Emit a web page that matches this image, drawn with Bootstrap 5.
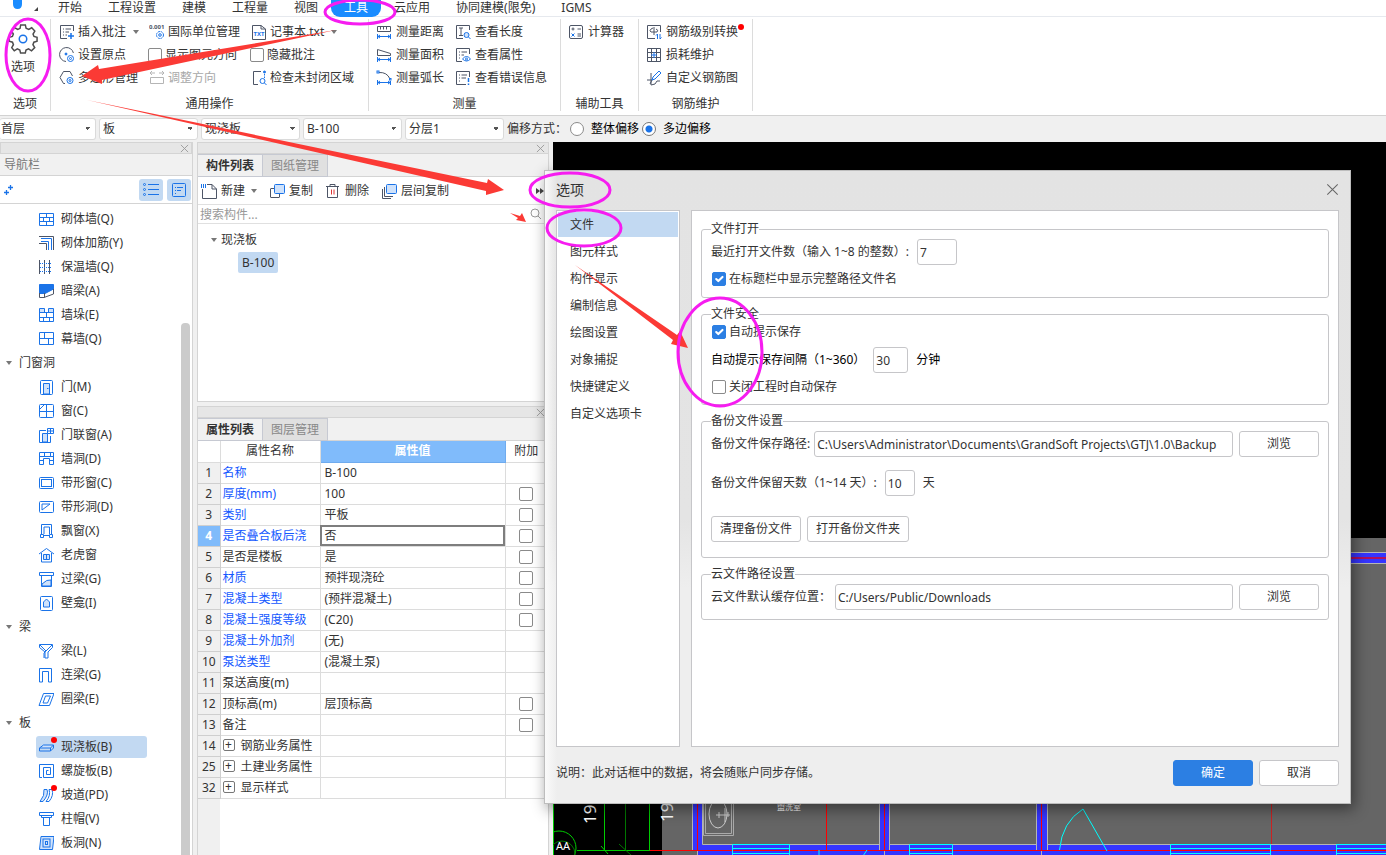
<!DOCTYPE html>
<html lang="zh-CN">
<head>
<meta charset="utf-8">
<meta name="viewport" content="width=device-width, initial-scale=1">
<title>选项</title>
<link href="https://cdn.jsdelivr.net/npm/bootstrap@5.3.0/dist/css/bootstrap.min.css" rel="stylesheet">
<style>
  :root { --blue:#1a73e8; --ink:#333; --line:#d4d4d4; --sel:#c2d9f2; --frame:#c6c6c9; }
  body { font-family:"Noto Sans","Noto Sans CJK SC",sans-serif; font-size:12px; line-height:16px; color:var(--ink); background:#f0f0f0; }
  button, input, select { font-size:12px; line-height:16px; color:inherit; font-family:inherit; }
  svg { display:block; flex:none; }
  .ico { width:16px; height:16px; fill:none; stroke:var(--blue); stroke-width:1; }
  symbol .k { stroke:#4d5566; }
  symbol .s { fill:#cfe2fb; }
  symbol .f { fill:var(--blue); }
  .caret { width:0; height:0; border:3px solid transparent; border-top:4px solid #777; border-bottom:0; flex:none; }
  .plain { border:0; background:none; padding:0; display:flex; align-items:center; white-space:nowrap; text-align:left; }

  /* menu tabs */
  .menubar { height:17px; border-bottom:1px solid #e6e9ee; }
  .menubar .nav { margin-left:3px; }
  .menubar .nav-link { padding:0 13px; line-height:15px; height:17px; color:var(--ink); white-space:nowrap; }
  .menubar .nav-link.active { background:#1a8cff; color:#fff; border-radius:0 0 9px 9px; }
  .applogo { width:42px; height:16px; }

  /* ribbon */
  .ribbon { height:99px; padding-top:2px; border-bottom:1px solid #d2d2d2; }
  .rgroup { border-right:1px solid #dcdcdc; height:92px; }
  .rgrid { display:grid; grid-auto-flow:column; grid-template-rows:repeat(3,23px); height:75px; padding:1px 0 0 7px; justify-content:start; }
  .rgrid > * { height:23px; gap:4px; display:flex; align-items:center; white-space:nowrap; }
  .g-com .rgrid > * { gap:3px; }
  .g-com .rgrid > label { margin-left:-1px; }
  .rbig { height:75px; }
  .rname { text-align:center; line-height:19px; }
  .g-opt { width:51px; } .g-com { width:318px; } .g-mea { width:192px; } .g-aux { width:78px; } .g-bar { width:114px; }
  .g-com .rgrid { grid-template-columns:90px 102px 110px; padding-left:8px; }
  .g-mea .rgrid { grid-template-columns:79px 100px; }
  .dim { color:#a8a8a8; }
  .reddot { position:absolute; width:6px; height:6px; border-radius:50%; background:#f00; }
  .form-check-input { width:14px; height:14px; margin:0; border:1px solid #8a8a8a; flex:none; float:none; box-shadow:none; }
  .form-check-input[type=checkbox] { border-radius:2px; }
  .form-check-input:checked { background-color:#2c7fe3; border-color:#2c7fe3; }
  .form-check-input[type=checkbox]:checked { background-size:14px 14px; }
  .form-check-input[type=radio]:checked { background-color:#fff; border-color:#777; background-image:radial-gradient(circle,#1a73e8 0 3px,#fff 4px); }

  /* filter row */
  .filters { height:26px; gap:3px; padding-bottom:1px; }
  .filters .form-select { width:99px; height:22px; padding:0 12px 0 3px; border:1px solid #dadada; border-radius:3px; background-color:#fff; font-size:12px; line-height:16px; color:var(--ink);
    background-image:linear-gradient(45deg,transparent 50%,#555 50%),linear-gradient(-45deg,transparent 50%,#555 50%); background-size:3px 3px; background-position:right 7px center,right 4px center; }
  .filters .form-select:first-child { width:96px; padding-left:1px; border-left:0; }
  .filters label { color:#000; gap:7px; }

  /* docked panels */
  .strip { height:12px; background:#e6e6e6; border:1px solid var(--line); display:flex; justify-content:flex-end; align-items:center; padding-right:2px; }
  .strip svg { width:9px; height:9px; stroke:#999; }
  .navpane { width:193px; border-right:1px solid var(--line); }
  .navhead { height:22px; padding:0 4px; line-height:22px; color:#777; background:#f1f1f1; border-bottom:1px solid var(--line); }
  .navtools { height:28px; border-bottom:1px solid var(--line); padding:0 1px 0 3px; gap:4px; }
  .navtools .toggle { width:24px; height:22px; background:var(--sel); border:0; border-radius:3px; padding:0; display:flex; align-items:center; justify-content:center; }
  .tree { display:flex; flex-direction:column; gap:2px; padding-top:4px; }
  .tree a { display:flex; align-items:center; height:22px; flex:none; color:var(--ink); text-decoration:none; white-space:nowrap; }
  .tree .leaf { margin-left:36px; width:111px; padding-left:2px; gap:7px; border-radius:3px; position:relative; }
  .tree .leaf.active { background:var(--sel); }
  .tree .branch { padding-left:6px; gap:7px; }
  .tree .reddot { left:15px; top:1px; }
  .thumb { width:9px; margin:119px 2px 0 0; border-radius:4px 4px 0 0; background:#cbcbcb; }
  .midpane { width:352px; margin-left:4px; gap:4px; }
  .dock { background:#fff; border:1px solid var(--line); border-top:0; }
  .dock > .strip { margin:0 -1px; padding-right:3px; }
  .dock.lower { border-bottom:0; }
  .dtabs { background:#f1f1f1; border-bottom:1px solid var(--line); height:23px; }
  .dtabs button { width:65px; height:23px; border:1px solid #c6c9d2; border-left:0; background:#e0e0e0; color:#888; padding:0; }
  .dtabs button.active { background:#f1f1f1; color:var(--ink); font-weight:700; }
  .ctools { height:28px; border-bottom:1px solid #e0e0e0; padding-left:3px; }
  .ctools .plain { gap:4px; }
  .ctools .caret { margin-left:2px; }
  .ctools .plain + .plain { margin-left:12px; }
  .search { height:19px; border-bottom:1px solid #e0e0e0; padding:0 6px 0 2px; }
  .search input { border:0; padding:1px 0 0; flex:1; outline:0; }
  .search input::placeholder { color:#999; opacity:1; }
  .upper { height:260px; }
  .citem { padding:8px 0 0 13px; gap:4px; }
  .chip { background:var(--sel); border-radius:2px; padding:0 4px; height:21px; line-height:21px; display:inline-block; color:var(--ink); text-decoration:none; }
  .props { table-layout:fixed; width:100%; margin:0; border-collapse:collapse; }
  .props th, .props td { height:21px; line-height:16px; padding:0 2px; border:1px solid #dcdcdc; border-top:0; white-space:nowrap; overflow:hidden; font-weight:400; }
  .props td:nth-child(3) { padding-left:4px; }
  .props tbody th { background:#f0f0f0; text-align:center; border-color:#cfcfcf; padding:0; border-left:0; }
  .props thead th { text-align:center; border-left:0; }
  .props thead .on { background:#80bbfb; color:#fff; font-weight:700; border-color:#6fabee; }
  .props tbody th.on { background:#80bbfb; color:#fff; font-weight:700; }
  .props td a { color:#1458ff; text-decoration:none; }
  .props .cur { outline:2px solid #7e7e7e; outline-offset:-2px; }
  .props .form-check-input { display:block; margin:auto; }
  .c-no { width:22px; } .c-name { width:100px; } .c-val { width:185px; }
  .plus { width:12px; height:12px; border:1px solid #777; border-radius:2px; padding:0; line-height:8px; background:#fff; margin:0 6px 0 0; display:inline-flex; align-items:center; justify-content:center; vertical-align:1px; }
  .gutter { width:22px; background:#f0f0f0; }
  .canvas { background:#000; margin-left:4px; overflow:hidden; }

  /* options window */
  .optwin { position:absolute; left:544px; right:35px; top:170px; border:1px solid #bdbdbd; padding:0 11px 17px; box-shadow:3px 5px 14px rgba(0,0,0,.45);
    background:linear-gradient(90deg,#fafafa 0,rgba(238,238,238,0) 12px),linear-gradient(#e3e3e3 0,#e4e4e4 55%,#eee 66%,#eee); }
  .opttitle { font-size:14px; height:39px; padding-bottom:2px; }
  .optbody { gap:11px; min-height:537px; }
  .optlist { width:124px; background:#fff; border:1px solid var(--frame); padding:1px; border-radius:0; }
  .optlist .list-group-item { border:0; border-radius:0; padding:0 12px; height:25px; line-height:25px; margin-bottom:2px; color:var(--ink); background:none; }
  .optlist .list-group-item.active { background:var(--sel); }
  .optpage { background:#fff; border:1px solid var(--frame); padding:10px 9px; display:flex; flex-direction:column; gap:8px; }
  .optpage fieldset { border:1px solid var(--frame); border-radius:3px; padding:2px 9px 9px; }
  .optpage .tight { padding:1px 9px 8px; }
  .optpage .roomy { padding-bottom:15px; }
  .optpage legend { float:none; width:auto; font-size:12px; line-height:16px; margin:0; padding:0; }
  .orow { display:flex; align-items:center; height:26px; white-space:nowrap; }
  .crow { display:flex; align-items:center; height:18px; gap:3px; padding-left:1px; }
  .orow + .crow { margin-top:5px; }
  .crow + .orow { margin-top:6px; }
  .orow + .days { margin-top:13px; }
  .orow + .acts { margin-top:20px; gap:6px; }
  .optwin .form-control { height:26px; padding:0 2px; font-size:12px; border:1px solid var(--frame); border-radius:3px; color:var(--ink); min-width:0; box-shadow:none; line-height:16px; }
  .optwin .btn { --bs-btn-font-size:12px; --bs-btn-padding-y:0; --bs-btn-padding-x:8px; --bs-btn-border-radius:3px; --bs-btn-line-height:16px; height:26px; min-width:80px; --bs-btn-bg:#fff; --bs-btn-border-color:#c6c6c9; --bs-btn-color:#333; white-space:nowrap; }
  .optwin .btn-primary { --bs-btn-bg:#2c7fe3; --bs-btn-border-color:#2c7fe3; --bs-btn-color:#fff; }
  .optwin .browse { margin-left:6px; }
  .optfoot { padding-top:13px; gap:6px; }
  .w30 { width:30px; } .w35 { width:35px; } .w40 { width:40px; }
  .marks { position:absolute; z-index:5; left:0; top:0; width:1386px; height:855px; pointer-events:none; fill:none; stroke:#f61cf0; stroke-width:3; }
  .marks path { fill:#fb3a35; stroke:none; }
</style>
</head>
<body>
<svg width="0" height="0" class="position-absolute" aria-hidden="true"><defs>
  <symbol id="i-note" viewBox="0 0 16 16"><path class="k" d="M14.500 7V1.500H1.500V14.500H8M4 5h1M6.500 5H12M4 8h1M6.500 8H10M4 11h1M6.500 11H8"/><path d="M12 9v6M9 12h6" stroke-width="1.500"/></symbol>
  <symbol id="i-origin" viewBox="0 0 16 16"><path class="k" d="M7 14.500A7 7 0 1 1 14.400 6"/><circle class="f" cx="7" cy="7" r="1"/><circle cx="11.500" cy="11.500" r="3"/><circle cx="11.500" cy="11.500" r="1"/></symbol>
  <symbol id="i-poly" viewBox="0 0 16 16"><path class="k" d="M6 13.500H4.500L1 7.500 4.500 1.500H11L13.500 6"/><circle cx="11" cy="10.500" r="3"/><circle cx="11" cy="10.500" r="1"/></symbol>
  <symbol id="i-unit" viewBox="0 0 16 16"><text x="0" y="5" font-size="6" fill="#4d5566" stroke="none" font-weight="700">0.001</text><circle cx="11" cy="11" r="3.500" stroke-dasharray="2 .8"/><circle cx="11" cy="11" r="1.300"/></symbol>
  <symbol id="i-adj" viewBox="0 0 16 16"><path stroke="#b5b5b5" d="M1.500 7.500h13v6h-13zM1 3h5M3 1 1 3l2 2M10 3h5M13 1l2 2-2 2"/></symbol>
  <symbol id="i-txt" viewBox="0 0 16 16"><path class="k" d="M1.500 1.500H10L14.500 5V15.500H1.500zM10 1.500V5h4.500"/><text x="2.500" y="12" font-size="6" font-weight="700" fill="#1a73e8" stroke="none">TXT</text></symbol>
  <symbol id="i-region" viewBox="0 0 16 16"><path class="k" d="M10 1.500H2.500V14.500H7"/><path d="M13.500 4v4" stroke-dasharray="1.500 1"/><circle class="f" cx="13.500" cy="2" r="1"/><circle cx="11.500" cy="11" r="2.500"/><path d="m13.500 13 2 2"/></symbol>
  <symbol id="i-dist" viewBox="0 0 16 16"><path class="k" d="M1.500 2.500h13v5h-13zM4.500 3v2.500M7.500 3v2.500M10.500 3v2.500"/><path d="M1.500 10v5M14.500 10v5M2 12.500h12M4 11l-2 1.500L4 14M12 11l2 1.500-2 1.500"/></symbol>
  <symbol id="i-area" viewBox="0 0 16 16"><path class="k" d="M1.500 2.500v6h13V6.500z"/><path d="M1.500 10v5M14.500 10v5M2 12.500h12M4 11l-2 1.500L4 14M12 11l2 1.500-2 1.500"/></symbol>
  <symbol id="i-arc" viewBox="0 0 16 16"><path class="k" d="M3 2.500Q11 2 14 9"/><rect x="1" y="1" width="2" height="2"/><rect x="13.500" y="8.500" width="1.500" height="1.500"/><path d="M1.500 10v5M14.500 11v4M2 12.500h12M4 11l-2 1.500L4 14M12 11l2 1.500-2 1.500"/></symbol>
  <symbol id="i-len" viewBox="0 0 16 16"><path class="k" d="M14.500 6V1.500H1.500V14.500H8M4 4h4M6 4v7.500M4 11.500h4"/><circle class="s" cx="11.500" cy="11" r="2.500"/><path d="m13.500 13 2 2"/></symbol>
  <symbol id="i-attr" viewBox="0 0 16 16"><path class="k" d="M14.500 7V1.500H1.500V14.500H7M4 5h1M6.500 5H12M4 8h1M6.500 8H9M4 11h1"/><path d="M7.500 12q4-5 8 0-4 4-8 0z"/><circle cx="11.500" cy="12" r="1"/></symbol>
  <symbol id="i-err" viewBox="0 0 16 16"><path class="k" d="M14.500 7V1.500H1.500V14.500H11M4 5h1M6.500 5H12M4 8h1M6.500 8H11M4 11h1"/><path d="M13.500 8v4M13.500 13.500V15" stroke-width="1.500"/></symbol>
  <symbol id="i-calc" viewBox="0 0 16 16"><rect class="k" x="1.500" y="1.500" width="13" height="13" rx="1.500"/><path class="k" d="M3.500 5h3M5 3.500v3M9.500 5H13M9.500 10H13M9.500 12H13"/><path d="m3.500 9.500 3 3M6.500 9.500l-3 3"/></symbol>
  <symbol id="i-lvl" viewBox="0 0 16 16"><path class="k" d="M14.500 8V1.500H1.500V14.500H9M8 3v8M5 5q-2 2 0 3h6q2-2-1-3M5 5l2-1"/><path d="M11.500 15V10L10 11.500M14 10v5l1.500-1.500"/></symbol>
  <symbol id="i-loss" viewBox="0 0 16 16"><path class="k" d="M1.500 1.500h13v13h-13zM1.500 5.500h13M1.500 10.500h13M5.500 1.500v13M10.500 1.500v13"/><path d="M8 5v6M5 8h6"/></symbol>
  <symbol id="i-draw" viewBox="0 0 16 16"><path class="k" d="M1 10h5l-2 4M5 3v12M5 15q5 0 6-4h3"/><path d="m6 10 1-3 6-6 2 2-6 6z"/></symbol>
  <symbol id="i-list" viewBox="0 0 16 16"><path d="M5 2.500h11M5 7.500h11M5 12.500h11"/><circle cx="1.500" cy="2.500" r="1"/><circle cx="1.500" cy="7.500" r="1"/><circle cx="1.500" cy="12.500" r="1"/></symbol>
  <symbol id="i-card" viewBox="0 0 16 16"><rect x="1.500" y="1.500" width="13" height="13" rx="1"/><path d="M4 5.500h1M6 5.500h6M4 8.500h1M6 8.500h4M4 11.500h1"/></symbol>
  <symbol id="i-brick" viewBox="0 0 16 16"><path d="M1.500 2.500h14v12h-14zM1.500 6.500h14M1.500 10.500h14M8.500 2.500v4M5.500 6.500v4M11.500 6.500v4M8.500 10.500v4"/></symbol>
  <symbol id="i-rein" viewBox="0 0 16 16"><path class="k" d="M1 1.500h14.500V15M1 8.500h7.500V15"/><path d="M3 3.500h10.500V15M3 6.500h7.500V15"/></symbol>
  <symbol id="i-ins" viewBox="0 0 16 16"><path class="k" d="M1.500 1v14M6.500 1v14M11.500 1v14"/><path d="M2 4.500h12M2 8.500h12M2 12.500h12" stroke-dasharray="1 1"/></symbol>
  <symbol id="i-hid" viewBox="0 0 16 16"><path class="f" d="M1.500 1.500h14V6L7 10.500H1.500z"/><path class="k" d="M1.500 10v4.500H6L15.500 11V6M6.500 10v4.500"/></symbol>
  <symbol id="i-pier" viewBox="0 0 16 16"><path class="s" d="M1.500 1.500h5v4h-5zM10.500 1.500h5v4h-5z"/><path d="M1.500 2v12.500h14V2M1.500 5.500h14M1.500 10.500h14M8.500 5.500v5M5.500 10.500v4M11.500 10.500v4"/></symbol>
  <symbol id="i-curt" viewBox="0 0 16 16"><path d="M1.500 1.500h14v12h-14zM1.500 7.500h14M6.500 1.500v6M10.500 7.500v6"/></symbol>
  <symbol id="i-door" viewBox="0 0 16 16"><rect x="2.500" y="1.500" width="12" height="14" rx="1"/><path class="s" d="M5.500 15V4.500h6V15z"/><path d="M9 9.500h1.500"/></symbol>
  <symbol id="i-win" viewBox="0 0 16 16"><rect x="1.500" y="1.500" width="14" height="13" rx="1"/><path d="M8.500 1.500v13M1.500 8.500h14M2 6l4-4"/></symbol>
  <symbol id="i-dwin" viewBox="0 0 16 16"><path d="M8 3.500H1.500v12h11V9"/><path class="s" d="M4.500 15V6.500H9.500V15z"/><path d="M9.500 1.500h6v5h-6zM12.500 1.500v5M9.500 4h6"/></symbol>
  <symbol id="i-hole" viewBox="0 0 16 16"><path d="M1.500 1.500h14v12h-4v-6h-6v6h-4zM1.500 5.500h14M6.500 1.500v4M12.500 1.500v4M1.500 9.500h4M11.500 9.500h4"/></symbol>
  <symbol id="i-strip" viewBox="0 0 16 16"><rect x="1.500" y="2.500" width="14" height="11" rx="1"/><rect x="3.500" y="4.500" width="10" height="7"/></symbol>
  <symbol id="i-shole" viewBox="0 0 16 16"><rect x="1.500" y="2.500" width="14" height="11" rx="1"/><path d="M4 5h8L4 11z"/></symbol>
  <symbol id="i-bay" viewBox="0 0 16 16"><path d="M3.500 11V1.500h10V11M6 11V4h5.500v7M2.500 11.500h3v3h-3zM11.500 11.500h3v3h-3zM5 12.500h7"/></symbol>
  <symbol id="i-dorm" viewBox="0 0 16 16"><path d="M1 7 8.500 1.500 16 7M3.500 6v9h10V6"/><path class="s" d="M5.500 7.500h6v5h-6zM8.500 7.500v5"/></symbol>
  <symbol id="i-lint" viewBox="0 0 16 16"><path d="M1.500 1.500h14v3h-14zM3.500 4.500v11h10v-11"/><path class="s" d="M4 13q5-5 9-4v6H4z"/></symbol>
  <symbol id="i-niche" viewBox="0 0 16 16"><rect x="2.500" y="1.500" width="12" height="14" rx="1"/><path class="s" d="M5.500 12V7l3-3 3 3v5z"/></symbol>
  <symbol id="i-beam" viewBox="0 0 16 16"><path d="M1.500 1.500h13v3L10 9v6H7V9L1.500 4.500zM2 2l6 6M14 2 8 8l-2 2v5"/></symbol>
  <symbol id="i-link" viewBox="0 0 16 16"><path d="M1.500 15V1.500h12V15h-3V4.500h-6V15z"/></symbol>
  <symbol id="i-ring" viewBox="0 0 16 16"><path d="M5.500 2.500h10.500l-4.500 12H1zM7.500 5h5l-3 7H5z"/></symbol>
  <symbol id="i-slab" viewBox="0 0 16 16"><path class="s" d="m1.500 9 4-3h10l-3 3z"/><path d="M1.500 9v3h11l3-3V6M12.500 9v3"/></symbol>
  <symbol id="i-spir" viewBox="0 0 16 16"><path d="M4 14.500H1.500v-13h14v13h-10v-10h7v7h-4v-4h2"/></symbol>
  <symbol id="i-ramp" viewBox="0 0 16 16"><path class="s" d="M6 2.500h3q2 5-4 12H2q5-6 4-12z"/><path d="M11 2.500h3q2 6-3 12H8q5-6 3-12z"/></symbol>
  <symbol id="i-cap" viewBox="0 0 16 16"><path d="M1.500 1.500h14v3h-14zM3.500 4.500v2h10v-2M5.500 6.500v8h6v-8"/></symbol>
  <symbol id="i-shaft" viewBox="0 0 16 16"><path class="s" d="M3 1.500h13l-1.500 13H1.500z"/><rect x="5" y="4" width="7" height="8"/><rect x="7.500" y="6.500" width="2" height="3"/></symbol>
  <symbol id="i-new" viewBox="0 0 16 16"><path class="k" d="M6 1.500h5L15.500 6v9.500h-14V6M11 1.500V6h4.500"/><path stroke-width="4" stroke-dasharray="1 1" d="M0 3h5"/></symbol>
  <symbol id="i-copy" viewBox="0 0 16 16"><path class="k" d="M5 5.500H2q-.500 0-.500.500v8q0 .500.500.500h8q.500 0 .500-.500V11"/><rect class="s" x="5.500" y="1.500" width="10" height="9" rx="1"/></symbol>
  <symbol id="i-del" viewBox="0 0 16 16"><path class="k" d="M1 3.500h13M5 3V1.500h5V3M2.500 3.500v11h10v-11"/><path stroke="#d33" d="M6.500 6.500v5M9 6.500v5"/></symbol>
  <symbol id="i-lcopy" viewBox="0 0 16 16"><path class="k" d="M1.500 6v9.500H10M3.500 4v9.500H12"/><rect class="s" x="5.500" y="1.500" width="10" height="9" rx="1"/></symbol>
  <symbol id="i-x" viewBox="0 0 10 10"><path d="m1 1 8 8M9 1 1 9"/></symbol>
</defs></svg>

<div class="vh-100 d-flex flex-column overflow-hidden">
  <header class="bg-white">
    <nav class="menubar d-flex" aria-label="功能区">
      <svg class="applogo" viewBox="0 0 42 16"><path fill="#1a8cff" d="M13 0h9v4q0 5-4.500 5T13 4z"/><path fill="#444" d="M38 7v4h-4z"/></svg>
      <ul class="nav flex-nowrap">
        <li class="nav-item"><a class="nav-link" href="#">开始</a></li>
        <li class="nav-item"><a class="nav-link" href="#">工程设置</a></li>
        <li class="nav-item"><a class="nav-link" href="#">建模</a></li>
        <li class="nav-item"><a class="nav-link" href="#">工程量</a></li>
        <li class="nav-item"><a class="nav-link" href="#">视图</a></li>
        <li class="nav-item"><a class="nav-link active" href="#">工具</a></li>
        <li class="nav-item"><a class="nav-link" href="#">云应用</a></li>
        <li class="nav-item"><a class="nav-link" href="#">协同建模(限免)</a></li>
        <li class="nav-item"><a class="nav-link" href="#">IGMS</a></li>
      </ul>
    </nav>
    <div class="ribbon d-flex">
      <section class="rgroup g-opt">
        <div class="rbig d-flex align-items-start">
          <button class="plain flex-column pt-1 ps-2 gap-1">
            <svg width="30" height="32" viewBox="0 0 32 34" fill="none" stroke="#4d4d4d" stroke-width="1.600"><path d="M13.500 2h5l.8 3.600 2.800 1.200L25.300 5l3.300 3.500-1.900 3.200 1 2.600 3.300.9v4.200l-3.400 1-1 2.600 1.900 3.200-3.400 3.400-3.200-2-2.700 1.200-.8 3.200h-5l-.8-3.200-2.700-1.200-3.200 2L4 26.200 5.800 23l-1-2.600-3.500-1v-4.200l3.400-.9 1-2.600L3.900 8.500 7.200 5l3.200 1.800 2.500-1.200z"/><circle cx="16" cy="17" r="4" stroke="#1a73e8"/></svg>
            <span>选项</span></button>
        </div>
        <div class="rname">选项</div>
      </section>
      <section class="rgroup g-com">
        <div class="rgrid">
          <button class="plain"><svg class="ico"><use href="#i-note"/></svg>插入批注<i class="caret ms-1"></i></button>
          <button class="plain"><svg class="ico"><use href="#i-origin"/></svg>设置原点</button>
          <button class="plain"><svg class="ico"><use href="#i-poly"/></svg>多边形管理</button>
          <button class="plain"><svg class="ico"><use href="#i-unit"/></svg>国际单位管理</button>
          <label><input type="checkbox" class="form-check-input">显示图元方向</label>
          <button class="plain dim" disabled><svg class="ico"><use href="#i-adj"/></svg>调整方向</button>
          <button class="plain"><svg class="ico"><use href="#i-txt"/></svg>记事本.txt<i class="caret ms-1"></i></button>
          <label><input type="checkbox" class="form-check-input">隐藏批注</label>
          <button class="plain"><svg class="ico"><use href="#i-region"/></svg>检查未封闭区域</button>
        </div>
        <div class="rname">通用操作</div>
      </section>
      <section class="rgroup g-mea">
        <div class="rgrid">
          <button class="plain"><svg class="ico"><use href="#i-dist"/></svg>测量距离</button>
          <button class="plain"><svg class="ico"><use href="#i-area"/></svg>测量面积</button>
          <button class="plain"><svg class="ico"><use href="#i-arc"/></svg>测量弧长</button>
          <button class="plain"><svg class="ico"><use href="#i-len"/></svg>查看长度</button>
          <button class="plain"><svg class="ico"><use href="#i-attr"/></svg>查看属性</button>
          <button class="plain"><svg class="ico"><use href="#i-err"/></svg>查看错误信息</button>
        </div>
        <div class="rname">测量</div>
      </section>
      <section class="rgroup g-aux">
        <div class="rgrid"><button class="plain"><svg class="ico"><use href="#i-calc"/></svg>计算器</button></div>
        <div class="rname">辅助工具</div>
      </section>
      <section class="rgroup g-bar">
        <div class="rgrid">
          <button class="plain position-relative"><svg class="ico"><use href="#i-lvl"/></svg>钢筋级别转换<i class="reddot top-0 start-100 mt-1"></i></button>
          <button class="plain"><svg class="ico"><use href="#i-loss"/></svg>损耗维护</button>
          <button class="plain"><svg class="ico"><use href="#i-draw"/></svg>自定义钢筋图</button>
        </div>
        <div class="rname">钢筋维护</div>
      </section>
    </div>
  </header>

  <form class="filters d-flex align-items-center">
    <select class="form-select" aria-label="楼层"><option>首层</option></select>
    <select class="form-select" aria-label="构件大类"><option>板</option></select>
    <select class="form-select" aria-label="构件类型"><option>现浇板</option></select>
    <select class="form-select" aria-label="构件"><option>B-100</option></select>
    <select class="form-select" aria-label="分层"><option>分层1</option></select>
    <span>偏移方式：</span>
    <label class="d-flex align-items-center"><input class="form-check-input" type="radio" name="off">整体偏移</label>
    <label class="d-flex align-items-center"><input class="form-check-input" type="radio" name="off" checked>多边偏移</label>
  </form>

  <main class="d-flex flex-grow-1 overflow-hidden">
    <aside class="navpane d-flex flex-column flex-shrink-0 bg-white">
      <div class="strip"><svg><use href="#i-x"/></svg></div>
      <div class="navhead">导航栏</div>
      <div class="navtools d-flex align-items-center">
        <svg class="ico me-auto" viewBox="0 0 16 16"><path d="M1 10.500h5M3.500 8v5M5 5.500h5M7.500 3v5" stroke-width="1.300"/></svg>
        <button class="toggle" aria-label="列表"><svg class="ico"><use href="#i-list"/></svg></button>
        <button class="toggle" aria-label="卡片"><svg class="ico"><use href="#i-card"/></svg></button>
      </div>
      <div class="d-flex flex-grow-1 overflow-hidden">
        <nav class="tree flex-grow-1">
          <a class="leaf" href="#"><svg class="ico"><use href="#i-brick"/></svg>砌体墙(Q)</a>
          <a class="leaf" href="#"><svg class="ico"><use href="#i-rein"/></svg>砌体加筋(Y)</a>
          <a class="leaf" href="#"><svg class="ico"><use href="#i-ins"/></svg>保温墙(Q)</a>
          <a class="leaf" href="#"><svg class="ico"><use href="#i-hid"/></svg>暗梁(A)</a>
          <a class="leaf" href="#"><svg class="ico"><use href="#i-pier"/></svg>墙垛(E)</a>
          <a class="leaf" href="#"><svg class="ico"><use href="#i-curt"/></svg>幕墙(Q)</a>
          <a class="branch" href="#"><i class="caret"></i>门窗洞</a>
          <a class="leaf" href="#"><svg class="ico"><use href="#i-door"/></svg>门(M)</a>
          <a class="leaf" href="#"><svg class="ico"><use href="#i-win"/></svg>窗(C)</a>
          <a class="leaf" href="#"><svg class="ico"><use href="#i-dwin"/></svg>门联窗(A)</a>
          <a class="leaf" href="#"><svg class="ico"><use href="#i-hole"/></svg>墙洞(D)</a>
          <a class="leaf" href="#"><svg class="ico"><use href="#i-strip"/></svg>带形窗(C)</a>
          <a class="leaf" href="#"><svg class="ico"><use href="#i-shole"/></svg>带形洞(D)</a>
          <a class="leaf" href="#"><svg class="ico"><use href="#i-bay"/></svg>飘窗(X)</a>
          <a class="leaf" href="#"><svg class="ico"><use href="#i-dorm"/></svg>老虎窗</a>
          <a class="leaf" href="#"><svg class="ico"><use href="#i-lint"/></svg>过梁(G)</a>
          <a class="leaf" href="#"><svg class="ico"><use href="#i-niche"/></svg>壁龛(I)</a>
          <a class="branch" href="#"><i class="caret"></i>梁</a>
          <a class="leaf" href="#"><svg class="ico"><use href="#i-beam"/></svg>梁(L)</a>
          <a class="leaf" href="#"><svg class="ico"><use href="#i-link"/></svg>连梁(G)</a>
          <a class="leaf" href="#"><svg class="ico"><use href="#i-ring"/></svg>圈梁(E)</a>
          <a class="branch" href="#"><i class="caret"></i>板</a>
          <a class="leaf active" href="#"><svg class="ico"><use href="#i-slab"/></svg>现浇板(B)<i class="reddot"></i></a>
          <a class="leaf" href="#"><svg class="ico"><use href="#i-spir"/></svg>螺旋板(B)</a>
          <a class="leaf" href="#"><svg class="ico"><use href="#i-ramp"/></svg>坡道(PD)<i class="reddot"></i></a>
          <a class="leaf" href="#"><svg class="ico"><use href="#i-cap"/></svg>柱帽(V)</a>
          <a class="leaf" href="#"><svg class="ico"><use href="#i-shaft"/></svg>板洞(N)</a>
        </nav>
        <div class="thumb"></div>
      </div>
    </aside>

    <div class="midpane d-flex flex-column flex-shrink-0">
      <section class="dock upper">
        <div class="strip"><svg><use href="#i-x"/></svg></div>
        <div class="dtabs d-flex"><button class="active">构件列表</button><button>图纸管理</button></div>
        <div class="ctools d-flex align-items-center">
          <button class="plain"><svg class="ico"><use href="#i-new"/></svg>新建<i class="caret"></i></button>
          <button class="plain"><svg class="ico"><use href="#i-copy"/></svg>复制</button>
          <button class="plain"><svg class="ico"><use href="#i-del"/></svg>删除</button>
          <button class="plain"><svg class="ico"><use href="#i-lcopy"/></svg>层间复制</button>
          <svg class="ms-auto me-1" width="8" height="8"><path fill="#444" d="M0 1l4 3-4 3zM4 1l4 3-4 3z"/></svg>
        </div>
        <div class="search d-flex align-items-center">
          <input type="text" placeholder="搜索构件..." aria-label="搜索构件">
          <svg width="13" height="12" fill="none" stroke="#999"><circle cx="6" cy="5" r="4"/><path d="m9 8 3 3"/></svg>
        </div>
        <div class="citem d-flex align-items-center"><i class="caret"></i>现浇板</div>
        <div class="mt-1 ps-4"><a href="#" class="chip ms-3">B-100</a></div>
      </section>
      <section class="dock lower flex-grow-1 d-flex flex-column overflow-hidden">
        <div class="strip flex-shrink-0"><svg><use href="#i-x"/></svg></div>
        <div class="dtabs d-flex flex-shrink-0"><button class="active">属性列表</button><button>图层管理</button></div>
        <table class="props">
          <colgroup><col class="c-no"><col class="c-name"><col class="c-val"><col></colgroup>
          <thead><tr><th></th><th>属性名称</th><th class="on">属性值</th><th>附加</th></tr></thead>
          <tbody>
            <tr><th>1</th><td><a href="#">名称</a></td><td>B-100</td><td></td></tr>
            <tr><th>2</th><td><a href="#">厚度(mm)</a></td><td>100</td><td><input type="checkbox" class="form-check-input" aria-label="附加 厚度"></td></tr>
            <tr><th>3</th><td><a href="#">类别</a></td><td>平板</td><td><input type="checkbox" class="form-check-input" aria-label="附加 类别"></td></tr>
            <tr><th class="on">4</th><td><a href="#">是否叠合板后浇</a></td><td class="cur">否</td><td><input type="checkbox" class="form-check-input" aria-label="附加 叠合板后浇"></td></tr>
            <tr><th>5</th><td>是否是楼板</td><td>是</td><td><input type="checkbox" class="form-check-input" aria-label="附加 楼板"></td></tr>
            <tr><th>6</th><td><a href="#">材质</a></td><td>预拌现浇砼</td><td><input type="checkbox" class="form-check-input" aria-label="附加 材质"></td></tr>
            <tr><th>7</th><td><a href="#">混凝土类型</a></td><td>(预拌混凝土)</td><td><input type="checkbox" class="form-check-input" aria-label="附加 混凝土类型"></td></tr>
            <tr><th>8</th><td><a href="#">混凝土强度等级</a></td><td>(C20)</td><td><input type="checkbox" class="form-check-input" aria-label="附加 强度等级"></td></tr>
            <tr><th>9</th><td><a href="#">混凝土外加剂</a></td><td>(无)</td><td></td></tr>
            <tr><th>10</th><td><a href="#">泵送类型</a></td><td>(混凝土泵)</td><td></td></tr>
            <tr><th>11</th><td>泵送高度(m)</td><td></td><td></td></tr>
            <tr><th>12</th><td>顶标高(m)</td><td>层顶标高</td><td><input type="checkbox" class="form-check-input" aria-label="附加 顶标高"></td></tr>
            <tr><th>13</th><td>备注</td><td></td><td><input type="checkbox" class="form-check-input" aria-label="附加 备注"></td></tr>
            <tr><th>14</th><td><button class="plus">+</button>钢筋业务属性</td><td></td><td></td></tr>
            <tr><th>25</th><td><button class="plus">+</button>土建业务属性</td><td></td><td></td></tr>
            <tr><th>32</th><td><button class="plus">+</button>显示样式</td><td></td><td></td></tr>
          </tbody>
        </table>
        <div class="gutter flex-grow-1"></div>
      </section>
    </div>

    <section class="canvas flex-grow-1" aria-label="绘图区">
      <svg width="100%" height="100%"><g transform="translate(-553 -142)" fill="none">
        <path fill="#656565" d="M662 538h3000v1000H662z"/>
        <path fill="#3535ff" d="M1300 552h2000v11H1300zM692 760h10v91H692zM879 760h10v91H879zM1037 760h10v91h-10zM697 845h3000v12H697z"/>
        <path stroke="#b5b5b5" d="M1300 552.500h2000M1300 563.500h2000M692.500 760v90.500h10M702.500 760v84.500H879M879.500 760v90.500h10V760M889 844.500h148M1036.500 760v90.500h11V760M1047 844.500h2000M697.500 855V844.500M884.500 850v10M1041.500 850v10"/>
        <path stroke="#b01060" stroke-width="2" d="M1300 558h2000"/>
        <path stroke="#f00" d="M649 850.500h2000M697.500 760v90M826.500 760v90M884.500 760v90M1041.500 760v90"/>
        <path stroke="#c22" d="M1271.500 760v84"/>
        <path stroke="#0ff" d="M732.500 860V844.500h57V860M732 848.500h57M732 853.500h57M909.500 860V844.500h43V860M909 848.500h43M909 853.500h43M1170.500 860V844.500h100V860M1170 848.500h100M1170 853.500h100M1336.500 860V844.500h1000M1336 848.500h1000M1336 853.500h1000M1059.500 850Q1062 822 1083 809l24 42M819 850v6M863 856l4-6"/>
        <path stroke="#0c0" d="M553.500 760v95M604.500 760v90M649.500 760v90.500H577M601 846l7 8"/><path stroke="#070" d="M625.500 760v90M619 844l13 12"/>
        <circle cx="559" cy="848" r="17" stroke="#0c0"/><circle cx="562" cy="854" r="13" stroke="#070"/>
        <path stroke="#aaa" d="M703.500 800v35.500h30V800M705.500 800v33.500h26V800"/><ellipse cx="718" cy="814" rx="9" ry="14" stroke="#ccc"/><path stroke="#ccc" d="M716 815h14M725 808v14M719 812v6M728 812v5"/>
        <g fill="#fff"><text transform="translate(596 824) rotate(-90)" font-size="17">19</text><text transform="translate(673 822) rotate(-90)" font-size="17">19</text><text x="556" y="850" font-size="11">AA</text><text x="777" y="810" font-size="8">盥洗室</text></g>
      </g></svg>
    </section>
  </main>
</div>

<div class="optwin" role="dialog" aria-labelledby="opt-t">
  <div class="opttitle d-flex align-items-center justify-content-between"><span id="opt-t">选项</span>
    <button class="plain" aria-label="关闭"><svg width="13" height="13" viewBox="0 0 10 10" stroke="#666" stroke-width=".8"><use href="#i-x"/></svg></button></div>
  <div class="optbody d-flex">
    <div class="optlist list-group flex-shrink-0">
      <a href="#" class="list-group-item active">文件</a>
      <a href="#" class="list-group-item">图元样式</a>
      <a href="#" class="list-group-item">构件显示</a>
      <a href="#" class="list-group-item">编制信息</a>
      <a href="#" class="list-group-item">绘图设置</a>
      <a href="#" class="list-group-item">对象捕捉</a>
      <a href="#" class="list-group-item">快捷键定义</a>
      <a href="#" class="list-group-item">自定义选项卡</a>
    </div>
    <form class="optpage flex-grow-1">
      <fieldset>
        <legend>文件打开</legend>
        <div class="orow"><label for="recent">最近打开文件数（输入 1~8 的整数）:</label><input id="recent" class="form-control w40 ms-2" value="7"></div>
        <label class="crow"><input type="checkbox" class="form-check-input" checked>在标题栏中显示完整路径文件名</label>
      </fieldset>
      <fieldset class="tight">
        <legend>文件安全</legend>
        <label class="crow"><input type="checkbox" class="form-check-input" checked>自动提示保存</label>
        <div class="orow text-black"><label for="span">自动提示保存间隔（1~360）</label><input id="span" class="form-control w35 ms-2 me-2" value="30">分钟</div>
        <label class="crow"><input type="checkbox" class="form-check-input">关闭工程时自动保存</label>
      </fieldset>
      <fieldset class="roomy">
        <legend>备份文件设置</legend>
        <div class="orow"><label for="bpath">备份文件保存路径:</label><input id="bpath" class="form-control flex-grow-1 ms-1" value="C:\Users\Administrator\Documents\GrandSoft Projects\GTJ\1.0\Backup"><button type="button" class="btn browse">浏览</button></div>
        <div class="orow days"><label for="days">备份文件保留天数（1~14 天）:</label><input id="days" class="form-control w30 ms-2 me-2" value="10">天</div>
        <div class="orow acts"><button type="button" class="btn">清理备份文件</button><button type="button" class="btn">打开备份文件夹</button></div>
      </fieldset>
      <fieldset>
        <legend>云文件路径设置</legend>
        <div class="orow"><label for="cpath">云文件默认缓存位置：</label><input id="cpath" class="form-control flex-grow-1 ms-1" value="C:/Users/Public/Downloads"><button type="button" class="btn browse">浏览</button></div>
      </fieldset>
    </form>
  </div>
  <div class="optfoot d-flex align-items-center"><span class="me-auto">说明：此对话框中的数据，将会随账户同步存储。</span><button class="btn btn-primary">确定</button><button class="btn">取消</button></div>
</div>

<svg class="marks" viewBox="0 0 1386 855" aria-hidden="true">
  <ellipse cx="28" cy="55" rx="22" ry="36"/><ellipse cx="360" cy="12" rx="35" ry="12"/>
  <path d="M336 30 99 69 98 65 82 76l20 8v-4z"/>
  <path d="M87 100 487 183l1-4 16 11-18 5v-4z"/>
  <path d="m510 213 10 3 2-3 4 9-10-2 2-2z"/>
  <path d="m575 265 102 70 3-4 8 17-17-4 2-4z"/>
  <ellipse cx="570" cy="190" rx="40" ry="17"/><ellipse cx="584" cy="228" rx="37" ry="18"/><ellipse cx="720" cy="352" rx="42" ry="54"/>
</svg>
<script src="https://cdn.jsdelivr.net/npm/bootstrap@5.3.0/dist/js/bootstrap.bundle.min.js"></script>
</body>
</html>
